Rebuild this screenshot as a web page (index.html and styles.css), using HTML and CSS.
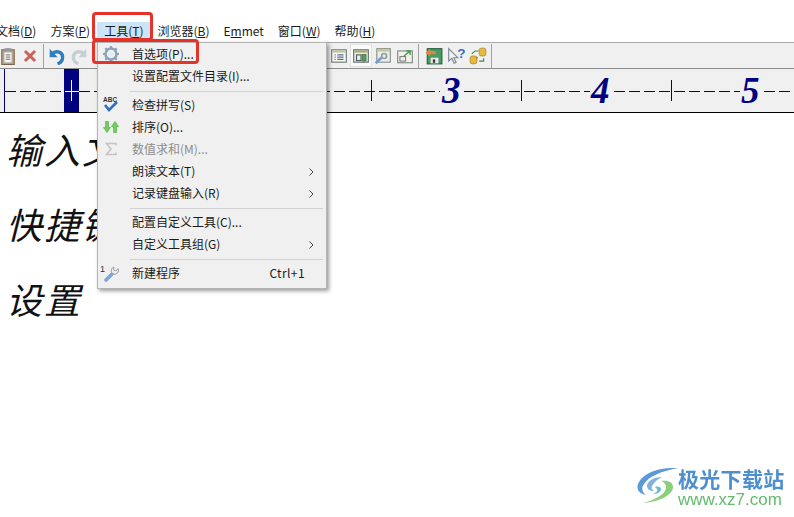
FILE: index.html
```html
<!DOCTYPE html>
<html lang="en">
<head>
  <meta charset="UTF-8">
  <meta name="viewport" content="width=device-width, initial-scale=1.0">
  <title>工具菜单</title>
  <link rel="stylesheet" href="styles.css">
</head>
<body>

  <div class="menubar">
    <span class="menubar-item first">文档(<u>D</u>)</span>
    <span class="menubar-item">方案(<u>P</u>)</span>
    <span class="menubar-item open">工具(<u>T</u>)</span>
    <span class="menubar-item">浏览器(<u>B</u>)</span>
    <span class="menubar-item">E<u>m</u>met</span>
    <span class="menubar-item">窗口(<u>W</u>)</span>
    <span class="menubar-item">帮助(<u>H</u>)</span>
  </div>

  <div class="toolbar">
    <span class="tool first">
      <svg viewBox="0 0 16 16"><rect x="2.5" y="2.5" width="11" height="13" fill="#c2a582" stroke="#7a6650"/><rect x="4.5" y="4.5" width="7" height="9.5" fill="#f6f6f2" stroke="#a8a8a8" stroke-width=".6"/><rect x="5" y="1" width="6" height="3" fill="#9a9a9a"/><path d="M6 7h4M6 9h4M6 11h4" stroke="#888" fill="none"/></svg>
    </span>
    <span class="tool">
      <svg viewBox="0 0 16 16"><path d="M3.5 3.5l9 9M12.5 3.5l-9 9" stroke="#c9605a" stroke-width="2.6" fill="none"/></svg>
    </span>
    <span class="tool-sep"></span>
    <span class="tool">
      <svg viewBox="0 0 16 16"><path d="M4 5.5C8 3 13 4.5 13 9c0 3-2 5-4.5 6" stroke="#2f7fbd" stroke-width="3" fill="none"/><path d="M1.500 1.500v7.500h7z" fill="#2f7fbd"/></svg>
    </span>
    <span class="tool">
      <svg viewBox="0 0 16 16"><path d="M12 5.500C8 3 3 4.500 3 9c0 3 2 5 4.500 6" stroke="#c6d0d4" stroke-width="3" fill="none"/><path d="M14.500 1.500v7.500h-7z" fill="#c6d0d4"/></svg>
    </span>

    <span class="tool-gap"></span>

    <span class="tool">
      <svg viewBox="0 0 16 16"><rect x="1.500" y="2.500" width="13" height="11" fill="#f6f6ee" stroke="#6f7a7a"/><rect x="2" y="3" width="12" height="2" fill="#c4c49c"/><path d="M4 7h1M4 9h1M4 11h1M6.500 7h5.500M6.500 9h5.500M6.500 11h5.500" stroke="#5a6f9a"/></svg>
    </span>
    <span class="tool active">
      <svg viewBox="0 0 16 16"><rect x="1.500" y="2.500" width="13" height="11" fill="#eef0e6" stroke="#5f6b6b"/><rect x="2" y="3" width="12" height="2" fill="#a9a97c"/><rect x="4" y="7" width="4" height="5" fill="none" stroke="#4a5a6a"/><rect x="9" y="6.500" width="3.500" height="6" fill="#5c9a5c" stroke="#3d6a3d" stroke-width=".6"/></svg>
    </span>
    <span class="tool">
      <svg viewBox="0 0 16 16"><rect x="2.500" y="1.500" width="12" height="12" fill="#eceee6" stroke="#8a8f88"/><rect x="3" y="2" width="11" height="2" fill="#c4c49c"/><path d="M1.500 14.500l5-5" stroke="#6f9fdc" stroke-width="2.500"/><circle cx="9" cy="8" r="2.200" fill="none" stroke="#8c9cac" stroke-width="1.500"/></svg>
    </span>
    <span class="tool">
      <svg viewBox="0 0 16 16"><rect x="1.500" y="3.500" width="13" height="10.500" fill="#f2f2ea" stroke="#7f8780"/><rect x="3.500" y="8.500" width="5" height="4" fill="none" stroke="#7f8780"/><path d="M7 8l5-4M9 3.500h3.500V7" stroke="#3c9a4c" fill="none" stroke-width="1.200"/></svg>
    </span>
    <span class="tool-sep"></span>
    <span class="tool-pad"></span>
    <span class="tool">
      <svg viewBox="0 0 16 16"><rect x="2" y="1.500" width="13" height="13.500" fill="#4a9a66" stroke="#2a5f3c"/><rect x="5" y="9.500" width="7" height="5" fill="#e8e8e8"/><rect x="7" y="11" width="2" height="3" fill="#333"/><path d="M.5 5l4-3.500v2h5v3h-5v2z" fill="#e8843a"/></svg>
    </span>
    <span class="tool">
      <svg viewBox="0 0 16 16"><path d="M1.500 1.500v11l2.800-2.500 2 4.500 1.800-.8-2-4.200h3.500z" fill="#f2f2f2" stroke="#7f8a94"/><text class="help-mark" x="9" y="10">?</text></svg>
    </span>
    <span class="tool">
      <svg viewBox="0 0 16 16"><rect x="1" y="8" width="6" height="7" rx="2" fill="#e8b93c" stroke="#a07c1c" stroke-width=".6"/><rect x="9" y="1" width="6" height="7" rx="2" fill="#e8b93c" stroke="#a07c1c" stroke-width=".6"/><path d="M2.500 6l3-2.500h3M8 9.500H6" stroke="#3c8c3c" fill="none"/><path d="M13 10v2.500H9" stroke="#3c8c3c" fill="none"/></svg>
    </span>
    <span class="tool-sep"></span>
  </div>

  <div class="ruler">
    <svg width="794" height="43" viewBox="0 0 794 43">
      <rect x="64" width="15" height="43" fill="#000080"/>
      <path d="M4.500 0v43" stroke="#000080"/>
      <path class="ruler-dash" d="M5 22.500h59M79 22.500h361M464 22.500h126M614 22.500h126M764 22.500h30"/>
      <path d="M371.500 11v21M521.500 11v21M671.500 11v21" stroke="#000080"/>
      <path d="M71.500 11v21M65 22.500h14" stroke="#fff"/>
      <text class="ruler-num" x="442" y="34">3</text>
      <text class="ruler-num" x="591" y="34">4</text>
      <text class="ruler-num" x="741" y="34">5</text>
    </svg>
  </div>

  <div class="editor">
    <p>输入文</p>
    <p>快捷键</p>
    <p>设置</p>
  </div>

  <div class="dropdown">
    <div class="row">
      <span class="row-icon">
        <svg width="18" height="18" viewBox="0 0 18 18"><g stroke="#8ca2b8"><circle cx="9" cy="9" r="5.5" fill="none" stroke-width="2.5"/><path d="M9 1v3M9 14v3M1 9h3M14 9h3M3.300 3.300l2.100 2.100M12.600 12.600l2.100 2.100M3.300 14.700l2.100-2.100M12.600 5.400l2.100-2.100" stroke-width="2.200" fill="none"/></g><circle cx="9" cy="9" r="3" fill="#e6ecf2"/></svg>
      </span>
      <span class="row-label">首选项(P)...</span>
    </div>
    <div class="row">
      <span class="row-icon"></span>
      <span class="row-label">设置配置文件目录(I)...</span>
    </div>
    <div class="row-sep"></div>
    <div class="row">
      <span class="row-icon">
        <svg width="18" height="18" viewBox="0 0 18 18"><text class="abc-mark" x="1" y="6">ABC</text><path d="M3 9l4 5 8-8" stroke="#2f6fbf" stroke-width="2.6" fill="none"/></svg>
      </span>
      <span class="row-label">检查拼写(S)</span>
    </div>
    <div class="row">
      <span class="row-icon">
        <svg width="16" height="12" viewBox="0 0 16 12"><path d="M2.500 .5h3v6h2L4 11.500 .5 6.500h2zM10.500 11.500h3v-6h2L12 .5l-3.500 5h2z" fill="#6fd05c" stroke="#4aa83c" stroke-width=".6"/></svg>
      </span>
      <span class="row-label">排序(O)...</span>
    </div>
    <div class="row disabled">
      <span class="row-icon">
        <svg width="12" height="14" viewBox="0 0 12 14"><path d="M11 3.500V1.500H1.500L6 7l-4.500 5.500H11v-2" fill="none" stroke="#c4c4c4" stroke-width="1.600"/></svg>
      </span>
      <span class="row-label">数值求和(M)...</span>
    </div>
    <div class="row">
      <span class="row-icon"></span>
      <span class="row-label">朗读文本(T)</span>
      <svg class="row-arrow" width="5" height="8" viewBox="0 0 5 8"><path d="M.5.500L4 4 .5 7.500" fill="none" stroke="#444"/></svg>
    </div>
    <div class="row">
      <span class="row-icon"></span>
      <span class="row-label">记录键盘输入(R)</span>
      <svg class="row-arrow" width="5" height="8" viewBox="0 0 5 8"><path d="M.5.500L4 4 .5 7.500" fill="none" stroke="#444"/></svg>
    </div>
    <div class="row-sep"></div>
    <div class="row">
      <span class="row-icon"></span>
      <span class="row-label">配置自定义工具(C)...</span>
    </div>
    <div class="row">
      <span class="row-icon"></span>
      <span class="row-label">自定义工具组(G)</span>
      <svg class="row-arrow" width="5" height="8" viewBox="0 0 5 8"><path d="M.5.500L4 4 .5 7.500" fill="none" stroke="#444"/></svg>
    </div>
    <div class="row-sep"></div>
    <div class="row">
      <span class="row-icon">
        <svg width="22" height="18" viewBox="0 0 22 18"><text class="one-mark" x="0" y="8">1</text><path d="M6 16l7-7" stroke="#7aa5de" stroke-width="3.600" stroke-linecap="round"/><path d="M12.500 9.500a3.800 3.800 0 0 1 1.500-6.500l-.5 3 2.500 1 2-2.500a3.800 3.800 0 0 1-5.500 5z" fill="#eef0f2" stroke="#9a9fa6"/></svg>
      </span>
      <span class="row-label">新建程序</span>
      <span class="row-key">Ctrl+1</span>
    </div>
  </div>

  <div class="mark mark-tab"></div>
  <div class="mark mark-item"></div>

  <div class="watermark">
    <svg width="44" height="40" viewBox="0 0 44 40">
      <path d="M42 2C24 1 7 6 2 18c-2 6 2 10 8 11-4-3-5-7-2-11C13 10 26 5 42 2z" fill="#5b9ad6"/>
      <path d="M26 11c-8 0-15 4-15 9 0 3 3 5 7 5-2-1-3-3-2-5 2-4 6-7 10-9z" fill="#7fb2e0"/>
      <path d="M25 15c7-1 12 1 12 6 0 8-14 15-30 16 11-3 22-8 23-15 .5-3-2-6-5-7z" fill="#8ccf7a"/>
      <path d="M19 21c3-1 6 0 6 2 0 3-4 5-8 5 3-1 5-3 4-5z" fill="#6fb9c8"/>
    </svg>
    <div class="watermark-text">
      <div class="watermark-name">极光下载站</div>
      <div class="watermark-url">www.xz7.com</div>
    </div>
  </div>

</body>
</html>
```

FILE: styles.css
```css
* {
  box-sizing: border-box;
}

body {
  margin: 0;
  height: 517px;
  overflow: hidden;
  background: #fff;
  color: #1a1a1a;
  font-family: "Noto Sans CJK SC", "Noto Sans", sans-serif;
  font-size: 12px;
  padding-top: 22px;
}

.menubar {
  display: flex;
  height: 20px;
  align-items: center;
}

.menubar-item {
  padding: 0 7px;
  height: 20px;
  line-height: 18px;
  white-space: nowrap;
}

.menubar-item.first {
  margin-left: -11px;
}

.menubar-item.open {
  background: #cce4f7;
  padding-right: 10px;
  margin-right: -3px;
}

.toolbar {
  display: flex;
  align-items: center;
  height: 27px;
  background: #f0f0f0;
  border-top: 1px solid #a8a8a8;
  border-bottom: 1px solid #8c8c8c;
}

.tool {
  width: 22px;
  height: 23px;
  display: flex;
  align-items: center;
  justify-content: center;
  flex: none;
}

.tool svg {
  width: 18px;
  height: 18px;
}

.tool.first {
  margin-left: -3px;
}

.tool.active {
  background: #fafafa;
  border: 1px solid #e2e2e2;
}

.tool-sep {
  width: 1px;
  height: 24px;
  margin: 0 2px;
  background: #a0a0a0;
  flex: none;
}

.tool-gap {
  width: 238px;
  flex: none;
}

.tool-pad {
  width: 2px;
  flex: none;
}

.help-mark {
  font-family: "Liberation Sans", sans-serif;
  font-weight: bold;
  font-size: 12px;
  fill: #3a6fc0;
}

.ruler {
  height: 44px;
  background: #f0f0f0;
  border-bottom: 1px solid #000;
}

.ruler svg {
  display: block;
}

.ruler-dash {
  stroke: #000080;
  stroke-dasharray: 11 4;
  fill: none;
}

.ruler-num {
  font-family: "Liberation Serif", serif;
  font-style: italic;
  font-weight: bold;
  font-size: 37px;
  fill: #000080;
}

.editor {
  margin-top: -2px;
  padding-left: 6px;
}

.editor p {
  margin: 0;
  height: 75px;
  line-height: 75px;
  font-size: 36px;
  font-style: italic;
  letter-spacing: 2px;
  color: #111;
  white-space: nowrap;
}

.dropdown {
  position: absolute;
  left: 97px;
  top: 42px;
  width: 230px;
  height: 247px;
  padding: 1px 3px 3px 2px;
  background: #f0f0f0;
  border: 1px solid #b4b4b4;
  box-shadow: 2px 2px 4px rgba(0, 0, 0, 0.4);
}

.row {
  display: flex;
  align-items: center;
  height: 22px;
  padding-right: 9px;
}

.row-icon {
  width: 30px;
  margin-right: 2px;
  margin-bottom: 2px;
  flex: none;
  display: flex;
  justify-content: center;
  padding-right: 8px;
}

.row-label {
  flex: 1;
  white-space: nowrap;
  padding-bottom: 3px;
}

.row-key {
  padding-right: 9px;
  padding-bottom: 3px;
  letter-spacing: 0.4px;
}

.row-arrow {
  margin-bottom: 1px;
}

.row.disabled {
  color: #8d8d8d;
}

.row-sep {
  height: 1px;
  margin: 3px 0 3px 30px;
  background: #d2d2d2;
}

.abc-mark {
  font-family: "Liberation Sans", sans-serif;
  font-weight: bold;
  font-size: 6.5px;
  fill: #333;
}

.one-mark {
  font-family: "Liberation Sans", sans-serif;
  font-size: 9px;
  fill: #333;
}

.mark {
  position: absolute;
  border: 3px solid #e5332a;
  border-radius: 4px;
}

.mark-tab {
  left: 92px;
  top: 12px;
  width: 61px;
  height: 29px;
}

.mark-item {
  left: 92px;
  top: 39px;
  width: 107px;
  height: 25px;
}

.watermark {
  position: absolute;
  left: 636px;
  top: 466px;
  display: flex;
  filter: blur(0.4px);
}

.watermark-text {
  margin-left: -2px;
}

.watermark-name {
  font-size: 21px;
  font-weight: 700;
  line-height: 25px;
  letter-spacing: 0.3px;
  color: #4d8fd0;
  white-space: nowrap;
}

.watermark-url {
  font-family: "Liberation Sans", sans-serif;
  font-size: 17px;
  line-height: 18px;
  color: #63bb6e;
}
```
